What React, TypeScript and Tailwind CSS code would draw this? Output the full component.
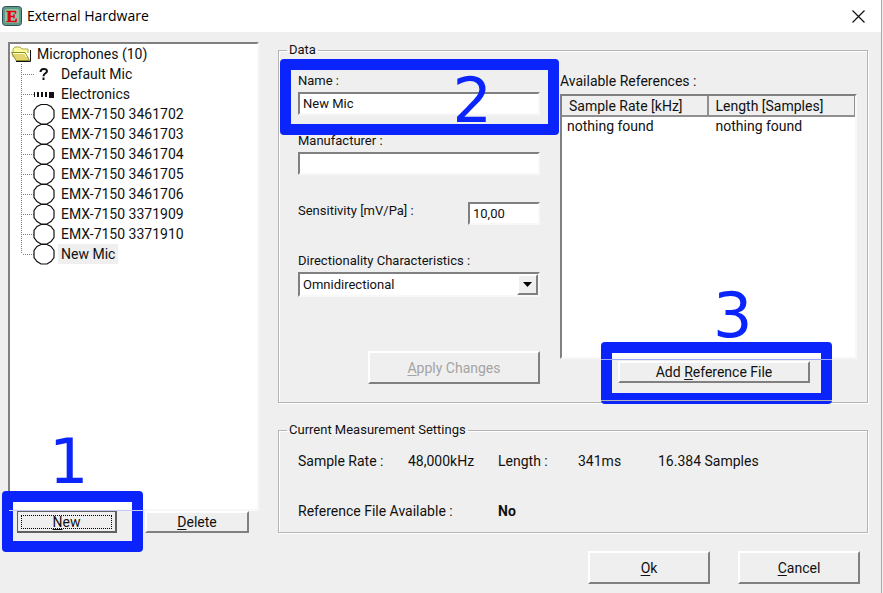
import React, { useState } from 'react';

type MicIcon = 'unknown' | 'electronics' | 'mic';

interface TreeItem {
  label: string;
  icon: MicIcon;
}

const MICROPHONES: TreeItem[] = [
  { label: 'Default Mic', icon: 'unknown' },
  { label: 'Electronics', icon: 'electronics' },
  { label: 'EMX-7150 3461702', icon: 'mic' },
  { label: 'EMX-7150 3461703', icon: 'mic' },
  { label: 'EMX-7150 3461704', icon: 'mic' },
  { label: 'EMX-7150 3461705', icon: 'mic' },
  { label: 'EMX-7150 3461706', icon: 'mic' },
  { label: 'EMX-7150 3371909', icon: 'mic' },
  { label: 'EMX-7150 3371910', icon: 'mic' },
  { label: 'New Mic', icon: 'mic' },
];

// Classic bevels
const SUNKEN = 'border-2 border-t-[#808080] border-l-[#808080] border-r-[#f8f8f8] border-b-[#f8f8f8] bg-white';
const RAISED = 'border-2 border-t-white border-l-white border-r-[#808080] border-b-[#808080] bg-[#efefef]';
const GROUP = 'min-w-0 border border-[#b4b4b4] shadow-[1px_1px_0_#fff,inset_1px_1px_0_#fff]';

const FolderIcon: React.FC = () => (
  <svg width="20" height="18" viewBox="0 0 20 18" className="shrink-0" aria-hidden="true">
    <path d="M2 12V4l2-2h5l2 2h6v4" fill="#fbfb9a" stroke="#a8a848" />
    <path d="M.5 7.500H14l4.500 8H5z" fill="#e3d56c" stroke="#8c8c28" />
    <path d="M2 8.500h11.500l2 3.500" fill="none" stroke="#ffffd8" />
    <path d="M5 16.500H19.500V5" fill="none" stroke="#111" />
  </svg>
);

const NodeIcon: React.FC<{ icon: MicIcon; last: boolean }> = ({ icon, last }) => (
  <svg width="34" height="20" viewBox="0 0 34 20" className="shrink-0 overflow-visible" aria-hidden="true">
    <path d={last ? 'M.5 0V10' : 'M.5 0V20'} stroke="#808080" strokeDasharray="1 1" />
    <path d="M2 10.500H13" stroke="#808080" strokeDasharray="1 1" />
    {icon === 'mic' && (
      <path
        d="M20 .5h6l4 2 3 4v7l-3 4-4 2.500h-6l-4-2.500-3-4v-7l3-4z"
        fill="#fff"
        stroke="#111"
        strokeWidth="1.200"
      />
    )}
    {icon === 'electronics' && (
      <path d="M13 8h1v5h-1zM16 8h2v5h-2zM20 8h2v5h-2zM24 8h2v5h-2zM28 8h5v6h-5z" fill="#111" />
    )}
    {icon === 'unknown' && (
      <path d="M19.500 8c0-4 6.500-4 6.500-.8 0 2-3.500 2.300-3.500 5M22.500 13.500v2.500" fill="none" stroke="#111" strokeWidth="2" />
    )}
  </svg>
);

interface PushButtonProps extends React.ButtonHTMLAttributes<HTMLButtonElement> {
  before?: string;
  hotkey: string;
  after: string;
}

const PushButton: React.FC<PushButtonProps> = ({ before, hotkey, after, className, ...rest }) => (
  <button type="button" className={`${RAISED} text-center ${className || ''}`} {...rest}>
    {before}
    <span className="underline underline-offset-2">{hotkey}</span>
    {after}
  </button>
);

// Step marker laid over the dialog
const Step: React.FC<{ number: number; box: string; digit: string; children?: React.ReactNode }> = ({
  number,
  box,
  digit,
  children,
}) => (
  <div className={`pointer-events-none absolute z-10 rounded border-[11px] border-[#0b24fb] ${box}`}>
    {children}
    <span className={`absolute font-['DejaVu_Sans'] text-[62px] leading-none text-[#0b24fb] ${digit}`}>{number}</span>
  </div>
);

const App: React.FC = () => {
  const [selected, setSelected] = useState('New Mic');
  const [name, setName] = useState('New Mic');
  const [manufacturer, setManufacturer] = useState('');
  const [sensitivity, setSensitivity] = useState('10,00');

  return (
    <div className="min-h-screen bg-[#efefef] pr-px">
      <div className="min-h-screen border-r border-[#a8a8a8] font-[Roboto,sans-serif] text-[14px] leading-4 text-[#111]">
        {/* Title bar */}
        <header className="flex h-8 items-center bg-white pl-0.5 pr-4">
          <svg width="20" height="20" viewBox="0 0 20 20" aria-hidden="true">
            <rect x=".5" y=".5" width="19" height="19" rx="3" fill="#5c9c84" stroke="#2f4f5f" />
            <rect x="3" y="3" width="14" height="14" rx="2" fill="#8fc4a0" />
            <text x="10" y="15.500" textAnchor="middle" fontFamily="Liberation Serif" fontWeight="bold" fontSize="17" fill="#e00010" stroke="#e00010" strokeWidth=".5">
              E
            </text>
          </svg>
          <h1 className="ml-[5px] flex-1 font-['Open_Sans',sans-serif] text-[14px] leading-5 text-black">External Hardware</h1>
          <button type="button" aria-label="Close">
            <svg width="13" height="13" viewBox="0 0 13 13" aria-hidden="true">
              <path d="M.5.5l12 12M12.500.5l-12 12" stroke="#111" strokeWidth="1.200" />
            </svg>
          </button>
        </header>

        <main className="pt-2.5 pl-2 pr-[13px]">
          <div className="flex gap-[19px]">
            {/* Microphone list */}
            <section className="flex w-[251px] shrink-0 flex-col">
              <div className={`flex-1 ${SUNKEN}`}>
                <div className="flex h-5 items-center gap-1.5 pl-px">
                  <FolderIcon />
                  Microphones (10)
                </div>
                <ul className="pl-[11px]">
                  {MICROPHONES.map((item, idx) => (
                    <li key={item.label} className="flex h-5 items-center gap-[3px]">
                      <NodeIcon icon={item.icon} last={idx === MICROPHONES.length - 1} />
                      <button
                        type="button"
                        onClick={() => setSelected(item.label)}
                        className={`h-5 px-[3px] ${selected === item.label ? 'bg-[#efefef]' : ''}`}
                      >
                        {item.label}
                      </button>
                    </li>
                  ))}
                </ul>
              </div>
              <div className="flex gap-7 pl-[9px] pr-2.5">
                <div className="relative flex-1">
                  <button type="button" className="block h-[22px] w-full border border-[#606060] border-r-2 border-b-2 bg-[#efefef] p-[3px]">
                    <span className="block border border-dotted border-black leading-[12px]">
                      <span className="underline underline-offset-2">N</span>ew
                    </span>
                  </button>
                  <Step number={1} box="-top-5 -right-[26px] -bottom-[19px] -left-[15px]" digit="-top-[71px] left-[36px]">
                    <span className="absolute -left-1 -right-3 top-2 h-px bg-[#c8ccf4]" />
                  </Step>
                </div>
                <PushButton hotkey="D" after="elete" className="h-[22px] flex-1 leading-[16px]" />
              </div>
            </section>

            <div className="flex min-w-0 flex-1 flex-col gap-[19px]">
              <fieldset className={`${GROUP} pb-4 pl-[19px] pr-2.5`}>
                <legend className="-ml-[11px] px-0.5 text-[13px]">Data</legend>
                <div className="grid grid-cols-[242fr_297fr] gap-5 pt-[15px]">
                  <div className="flex min-w-0 flex-col pb-0.5 text-[13px]">
                    <div className="relative flex flex-col gap-[3px]">
                      <label htmlFor="name">Name :</label>
                      <input
                        id="name"
                        value={name}
                        onChange={(e) => setName(e.target.value)}
                        className={`h-[23px] w-full px-[3px] outline-none ${SUNKEN}`}
                      />
                      <Step number={2} box="-top-3.5 -right-[19px] -bottom-5 -left-[18px]" digit="top-0 right-[56px]" />
                    </div>
                    <div className="mt-[18px] flex flex-col gap-[3px]">
                      <label htmlFor="manufacturer">Manufacturer :</label>
                      <input
                        id="manufacturer"
                        value={manufacturer}
                        onChange={(e) => setManufacturer(e.target.value)}
                        className={`h-[23px] w-full px-[3px] outline-none ${SUNKEN}`}
                      />
                    </div>
                    <div className="mt-[27px] flex justify-between">
                      <label htmlFor="sensitivity" className="pt-px">Sensitivity [mV/Pa] :</label>
                      <input
                        id="sensitivity"
                        value={sensitivity}
                        onChange={(e) => setSensitivity(e.target.value)}
                        className={`h-[23px] w-[72px] px-[3px] outline-none ${SUNKEN}`}
                      />
                    </div>
                    <div className="mt-7 flex flex-col gap-[3px]">
                      <label htmlFor="directionality">Directionality Characteristics :</label>
                      <div className="relative">
                        <select
                          id="directionality"
                          className={`block h-[25px] w-full appearance-none px-[3px] outline-none ${SUNKEN}`}
                        >
                          <option>Omnidirectional</option>
                          <option>Cardioid</option>
                        </select>
                        <span className={`pointer-events-none absolute top-0.5 right-0.5 flex h-[21px] w-[21px] items-center justify-center ${RAISED}`}>
                          <svg width="9" height="5" viewBox="0 0 9 5" aria-hidden="true">
                            <path d="M0 0h9L4.500 5z" fill="#000" />
                          </svg>
                        </span>
                      </div>
                    </div>
                    <PushButton
                      hotkey="A"
                      after="pply Changes"
                      disabled
                      className="mt-[54px] h-[33px] w-[172px] self-end text-[14px] text-[#a4a4a4]"
                    />
                  </div>

                  <div className="flex min-w-0 flex-col pb-[3px]">
                    <p>Available References :</p>
                    <div className={`mt-[5px] flex-1 ${SUNKEN}`}>
                      <table className="w-full table-fixed border-separate border-spacing-0 text-left">
                        <thead>
                          <tr>
                            <th className="h-[21px] border-r-2 border-b-2 border-[#909090] bg-[#efefef] p-0 pl-[7px] font-normal">
                              Sample Rate [kHz]
                            </th>
                            <th className="border-r border-b-2 border-[#909090] bg-[#efefef] p-0 pl-[7px] font-normal">
                              Length [Samples]
                            </th>
                          </tr>
                        </thead>
                        <tbody>
                          <tr>
                            <td className="h-[18px] p-0 pl-[5px]">nothing found</td>
                            <td className="p-0 pl-[7px]">nothing found</td>
                          </tr>
                        </tbody>
                      </table>
                    </div>
                    <div className="relative mt-0.5 mr-[47px] ml-[58px]">
                      <PushButton before="Add " hotkey="R" after="eference File" className="block h-[22px] w-full" />
                      <Step number={3} box="-top-[19px] -right-[22px] -bottom-[21px] -left-[17px]" digit="-top-[68px] left-[101px]">
                        <span className="absolute -inset-x-[11px] top-1.5 h-px bg-[#a0a8f8]" />
                        <span className="absolute -inset-x-[11px] -bottom-2 h-px bg-[#b4b4b4]" />
                      </Step>
                    </div>
                  </div>
                </div>
              </fieldset>

              <fieldset className={`${GROUP} pb-[13px] pl-[19px]`}>
                <legend className="-ml-[11px] px-0.5 text-[13px]">Current Measurement Settings</legend>
                <dl className="grid grid-cols-[110px_90px_80px_80px_1fr] gap-y-[34px] pt-[15px]">
                  <dt>Sample Rate :</dt>
                  <dd>48,000kHz</dd>
                  <dt>Length :</dt>
                  <dd>341ms</dd>
                  <dd>16.384 Samples</dd>
                  <dt className="col-span-2">Reference File Available :</dt>
                  <dd className="font-bold">No</dd>
                </dl>
              </fieldset>
            </div>
          </div>

          <footer className="mt-[18px] flex justify-end gap-7 pr-2">
            <PushButton hotkey="O" after="k" className="h-[33px] w-[122px]" />
            <PushButton hotkey="C" after="ancel" className="h-[33px] w-[122px]" />
          </footer>
        </main>
      </div>
    </div>
  );
};

export default App;
